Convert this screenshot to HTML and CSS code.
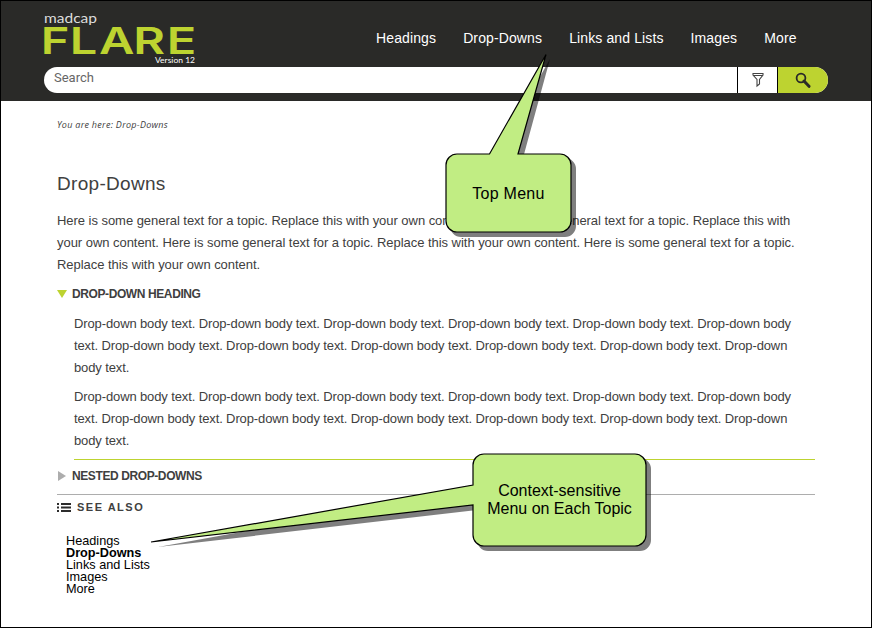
FILE: index.html
```html
<!DOCTYPE html>
<html lang="en">
<head>
<meta charset="utf-8">
<title>Drop-Downs</title>
<link rel="stylesheet" href="styles.css">
</head>
<body>
<div class="page">
  <header class="header">
    <div class="topbar">
      <svg class="logo" width="154" height="54" viewBox="0 0 154 54">
        <text class="logo-small" x="0" y="10.300" textLength="53" lengthAdjust="spacingAndGlyphs">madcap</text>
        <text class="logo-main" transform="scale(1.3 1)" x="-2.500 19.800 42.300 68.700 94.500" y="41">FLARE</text>
        <text class="logo-version" x="111" y="49.700" textLength="40" lengthAdjust="spacingAndGlyphs">Version 12</text>
      </svg>
      <nav class="nav">
        <a>Headings</a><a>Drop-Downs</a><a>Links and Lists</a><a>Images</a><a>More</a>
      </nav>
    </div>
    <div class="search">
      <div class="search-input">Search</div>
      <div class="search-filter">
        <svg width="12" height="16" viewBox="0 0 12 16"><path d="M1 1.500H11V3L7.500 7.500V12L5 14V7.500L1 3Z M1 3.500H11" fill="none" stroke="#444" stroke-width="1.1"/></svg>
      </div>
      <div class="search-button">
        <svg width="16" height="17" viewBox="0 0 16 17"><circle cx="6" cy="6" r="4.4" fill="none" stroke="#2a2a28" stroke-width="1.8"/><path d="M9 9L14 14.3" stroke="#2a2a28" stroke-width="3" stroke-linecap="round"/></svg>
      </div>
    </div>
  </header>
  <main class="content">
    <div class="crumbs">You are here: Drop-Downs</div>
    <h1>Drop-Downs</h1>
    <p class="intro">Here is some general text for a topic. Replace this with your own content. Here is some general text for a topic. Replace this with<br>your own content. Here is some general text for a topic. Replace this with your own content. Here is some general text for a topic.<br>Replace this with your own content.</p>
    <h2><svg width="10" height="8" viewBox="0 0 10 8"><path d="M0 0H10L5 8Z" fill="#bdd330"/></svg>DROP-DOWN HEADING</h2>
    <div class="dropdown">
      <p>Drop-down body text. Drop-down body text. Drop-down body text. Drop-down body text. Drop-down body text. Drop-down body<br>text. Drop-down body text. Drop-down body text. Drop-down body text. Drop-down body text. Drop-down body text. Drop-down<br>body text.</p>
      <p>Drop-down body text. Drop-down body text. Drop-down body text. Drop-down body text. Drop-down body text. Drop-down body<br>text. Drop-down body text. Drop-down body text. Drop-down body text. Drop-down body text. Drop-down body text. Drop-down<br>body text.</p>
    </div>
    <h2 class="nested"><svg width="10" height="10" viewBox="0 0 10 10"><path d="M1 0L9 5L1 10Z" fill="#adadad"/></svg>NESTED DROP-DOWNS</h2>
    <div class="see-also">
      <svg width="14" height="9" viewBox="0 0 14 9"><path d="M0 1H2M4 1H14M0 4.5H2M4 4.5H14M0 8H2M4 8H14" stroke="#2c2c2c" stroke-width="2"/></svg><span>SEE ALSO</span>
    </div>
    <ul class="menu">
      <li>Headings</li><li class="current">Drop-Downs</li><li>Links and Lists</li><li>Images</li><li>More</li>
    </ul>
  </main>
  <div class="callout callout-top">
    <svg width="140" height="190" viewBox="440 50 140 190">
      <path class="shade" d="M461 158H494L550 59L523 158H565A11 11 0 0 1 576 169V226A11 11 0 0 1 565 237H461A11 11 0 0 1 450 226V169A11 11 0 0 1 461 158Z"/>
      <path class="bubble" d="M457 154H489.500L546 54.500L518 154H560A11 11 0 0 1 571 165V221A11 11 0 0 1 560 232H457A11 11 0 0 1 446 221V165A11 11 0 0 1 457 154Z"/>
    </svg>
    <div class="label">Top Menu</div>
  </div>
  <div class="callout callout-context">
    <svg width="510" height="110" viewBox="145 445 510 110">
      <path class="shade" d="M488 458H640A11 11 0 0 1 651 469V540A11 11 0 0 1 640 551H488A11 11 0 0 1 477 540V510L158 547L477 489V469A11 11 0 0 1 488 458Z"/>
      <path class="bubble" d="M484 454H635A11 11 0 0 1 646 465V535A11 11 0 0 1 635 546H484A11 11 0 0 1 473 535V505L151 542L473 485V465A11 11 0 0 1 484 454Z"/>
    </svg>
    <div class="label"><span>Context-sensitive</span><br><span>Menu on Each Topic</span></div>
  </div>
</div>
</body>
</html>
```
FILE: styles.css
```css
* { box-sizing: border-box; }
body { margin: 0; font-family: "Liberation Sans", Arial, sans-serif; color: #404040; }
.page { position: relative; width: 872px; height: 628px; border: 1px solid #000; background: #fff; overflow: hidden; }
.header { height: 100px; padding: 12px 43px 0; background: #2a2a28; }
.topbar { display: flex; height: 54px; }
.logo { display: block; flex: none; overflow: visible; }
.logo-small { font: 13px Lato, sans-serif; fill: #ddd; }
.logo-main { font: 600 37.500px Inter, sans-serif; fill: #bdd330; }
.logo-version { font: 8px Lato, sans-serif; fill: #fff; }
.nav { display: flex; gap: 27px; margin-left: 178px; padding-top: 17px; font-size: 14px; line-height: 16px; letter-spacing: .12px; color: #fff; white-space: nowrap; }
.search { display: flex; width: 784px; height: 26px; border-radius: 13px; background: #fff; overflow: hidden; }
.search-input { width: 693px; padding: 3px 10px; font: 13px/15px Roboto, sans-serif; color: #666; }
.search-filter { display: flex; width: 41px; align-items: center; justify-content: center; border-left: 1px solid #000; border-right: 1px solid #000; }
.search-button { display: flex; flex: 1; align-items: center; justify-content: center; background: #bdd330; }
.content { width: 814px; padding-left: 56px; white-space: nowrap; }
.crumbs { padding-top: 18px; font: italic 9px/12px "Open Sans", sans-serif; letter-spacing: .28px; }
h1 { margin: 42px 0 15px; font-size: 19px; line-height: 22px; font-weight: 400; letter-spacing: .3px; }
p { margin: 0; font-size: 13px; line-height: 22px; letter-spacing: -.12px; }
.intro { letter-spacing: -.04px; }
h2 { display: flex; align-items: center; gap: 5px; margin: 9px 0 10px; font-size: 12px; line-height: 18px; font-weight: 700; letter-spacing: -.4px; }
.dropdown { margin-left: 17px; border-bottom: 1px solid #bdd330; }
.dropdown p + p { margin-top: 7px; }
.dropdown p:last-child { margin-bottom: 7px; }
.nested { margin: 0; height: 35px; padding-bottom: 2px; border-bottom: 1px solid #adadad; }
.see-also { display: flex; align-items: center; gap: 6px; height: 24px; font-size: 11px; font-weight: 700; letter-spacing: 1.500px; }
.menu { margin: 16px 0 0 9px; padding: 0; list-style: none; font-size: 12.700px; line-height: 12px; color: #000; }
.current { font-weight: 700; }
.callout { position: absolute; }
.callout svg { display: block; }
.callout-top { left: 439px; top: 49px; }
.callout-context { left: 144px; top: 444px; }
.label { position: absolute; font-size: 16px; line-height: 18px; text-align: center; color: #000; white-space: nowrap; }
.callout-top .label { left: 6px; top: 135px; width: 125px; letter-spacing: .25px; }
.callout-context .label { left: 328px; top: 37px; width: 173px; }
.bubble { fill: #c1ed83; stroke: #000; stroke-width: 1.2; }
.shade { fill: #000; opacity: .5; }
```
